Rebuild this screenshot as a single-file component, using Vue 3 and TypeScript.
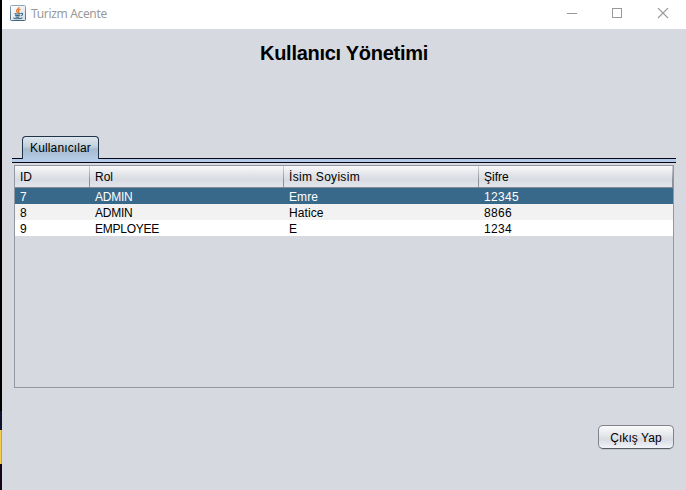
<script setup lang="ts">
import { ref } from 'vue'

interface User {
  id: number
  role: string
  name: string
  password: string
}

const users: User[] = [
  { id: 7, role: 'ADMIN', name: 'Emre', password: '12345' },
  { id: 8, role: 'ADMIN', name: 'Hatice', password: '8866' },
  { id: 9, role: 'EMPLOYEE', name: 'E', password: '1234' },
]
const columns: string[] = ['ID', 'Rol', 'İsim Soyisim', 'Şifre']
const selectedId = ref<number>(7)
</script>

<template>
  <div class="screen">
    <div class="desktop-edge">
      <i class="edge-black"></i>
      <i class="edge-navy"></i>
      <i class="edge-yellow"></i>
      <i class="edge-purple"></i>
    </div>
    <div class="window">
      <header class="titlebar">
        <svg class="java" width="16" height="16" viewBox="0 0 16 16">
          <defs>
            <linearGradient id="frame" x1="0" y1="0" x2="0" y2="1">
              <stop offset="0" stop-color="#8ba6ba" />
              <stop offset="1" stop-color="#44687f" />
            </linearGradient>
            <linearGradient id="face" x1="0" y1="0" x2="1" y2="1">
              <stop offset="0" stop-color="#ffffff" />
              <stop offset="1" stop-color="#d5dfe7" />
            </linearGradient>
          </defs>
          <rect x=".5" y=".5" width="15" height="15" rx="1" fill="url(#face)" stroke="url(#frame)" />
          <path d="M8.9 2.2C9.3 4.1 5.8 4.4 6.6 6.1L7.8 7.8M10.5 4.2C8.6 4.8 7.8 5.6 8.7 6.5C9.1 7.1 8.8 7.6 8.3 8" fill="none" stroke="#e8792b" stroke-width="1.3" />
          <path d="M4.5 8.5Q7 9.5 10.5 8.5M5 10.3Q7.5 11 10 10.3M5.5 11.9Q7.5 12.5 9.5 11.9M10.8 8.5C13.5 7.8 13 10.5 10.8 10.8M3.7 12.6C3 14 11 14.2 12.5 12.7" fill="none" stroke="#3d6785" stroke-width="1.1" />
        </svg>
        <span class="caption">Turizm Acente</span>
        <svg class="controls" width="104" height="12" viewBox="0 0 104 12" fill="none" stroke="#999">
          <path d="M0 5.5H10" />
          <rect x="45.5" y=".5" width="9" height="9" />
          <path d="M91 0L101 10M101 0L91 10" stroke-width="1.1" />
        </svg>
      </header>
      <main class="content">
        <h1>Kullanıcı Yönetimi</h1>
        <section class="tabs">
          <div class="tab-row"><button class="tab">Kullanıcılar</button></div>
          <div class="tab-rule"></div>
          <div class="table">
            <div class="row head">
              <span v-for="column in columns" :key="column" class="cell">{{ column }}</span>
            </div>
            <div
              v-for="user in users"
              :key="user.id"
              class="row body"
              :class="{ selected: user.id === selectedId }"
              @click="selectedId = user.id"
            >
              <span class="cell">{{ user.id }}</span>
              <span class="cell role">{{ user.role }}</span>
              <span class="cell name">{{ user.name }}</span>
              <span class="cell password">{{ user.password }}</span>
            </div>
          </div>
        </section>
        <footer><button class="exit">Çıkış Yap</button></footer>
      </main>
    </div>
  </div>
</template>

<style>
body {
  margin: 0;
  overflow: hidden;
}
</style>

<style scoped>
* {
  box-sizing: border-box;
}
.screen {
  display: flex;
  width: 686px;
  height: 490px;
  background: #d6d9e0;
  color: #000;
  font: 12px/16px "Liberation Sans", Arial, sans-serif;
}
.desktop-edge {
  display: flex;
  flex-direction: column;
  width: 2px;
}
.edge-black { height: 411px; background: #000; }
.edge-navy { height: 19px; background: #11122c; }
.edge-yellow { height: 34px; background: linear-gradient(90deg, #f5cb50 50%, #c5a54c 50%); }
.edge-purple { flex: 1; background: #160419; }
.window {
  display: flex;
  flex-direction: column;
  width: 684px;
}
.titlebar {
  display: flex;
  height: 29px;
  padding: 5px 15px 0 8px;
  background: #fff;
}
.caption {
  margin-left: 5px;
  padding-top: 1px;
  color: #999;
  font: 12px/16px "Noto Sans", "Open Sans", sans-serif;
  letter-spacing: -0.34px;
}
.controls {
  margin: 3px 0 0 auto;
}
.content {
  display: flex;
  flex-direction: column;
}
h1 {
  height: 107px;
  margin: 0;
  padding-top: 12px;
  font-size: 20px;
  line-height: 24px;
  letter-spacing: -0.28px;
  text-align: center;
}
.tabs {
  padding: 0 10px;
}
.tab-row {
  display: flex;
  height: 22px;
  padding-left: 10px;
}
.tab {
  width: 77px;
  height: 23px;
  padding: 0;
  border: 1px solid #21354a;
  border-bottom: 0;
  border-radius: 4px 4px 0 0;
  background: linear-gradient(#dfe6ed, #bfcedc 45%, #a6bbce 55%, #b3cbe5);
  color: #000;
  font: inherit;
  letter-spacing: 0.12px;
  white-space: nowrap;
  z-index: 1;
}
.tab-rule {
  height: 5px;
  border: solid #060719;
  border-width: 1px 0;
  background: #b4cbe7;
}
.table {
  width: 660px;
  height: 223px;
  margin: 2px 0 0 2px;
  border: 1px solid #9297a1;
}
.row {
  display: grid;
  grid-template-columns: 75px 194px 195px 194px;
}
.cell {
  padding-left: 5px;
  white-space: nowrap;
}
.head {
  height: 22px;
  border-bottom: 1px solid #858b94;
  background: linear-gradient(#fafafb, #e5e7eb 35%, #d8dbe1 65%, #e3e6ec);
}
.head .cell {
  padding-top: 3px;
  background: linear-gradient(#d2d4d8, #8d9098 70%) right / 1px 100% no-repeat;
  line-height: 16px;
}
.head .cell:nth-child(3) {
  letter-spacing: 0.3px;
}
.body {
  height: 16px;
  background: #fff;
  line-height: 18px;
}
.role {
  letter-spacing: -0.25px;
}
.name {
  letter-spacing: 0.1px;
}
.password {
  letter-spacing: 0.33px;
}
.body:nth-child(odd) {
  background: #f2f2f2;
}
.body.selected {
  background: #39698a;
  color: #fff;
}
footer {
  display: flex;
  justify-content: flex-end;
  padding: 37px 12px 0 0;
}
.exit {
  width: 76px;
  height: 24px;
  padding: 1px 0 0;
  border: 1px solid #7f838b;
  border-bottom-color: #565b64;
  border-radius: 5px;
  background: linear-gradient(#fafafb, #e6e8ec 40%, #d8dbe2 60%, #f0f3f8);
  box-shadow: 0 1px 0 #c3c7ce;
  color: #000;
  font: inherit;
  letter-spacing: 0.08px;
}
</style>
